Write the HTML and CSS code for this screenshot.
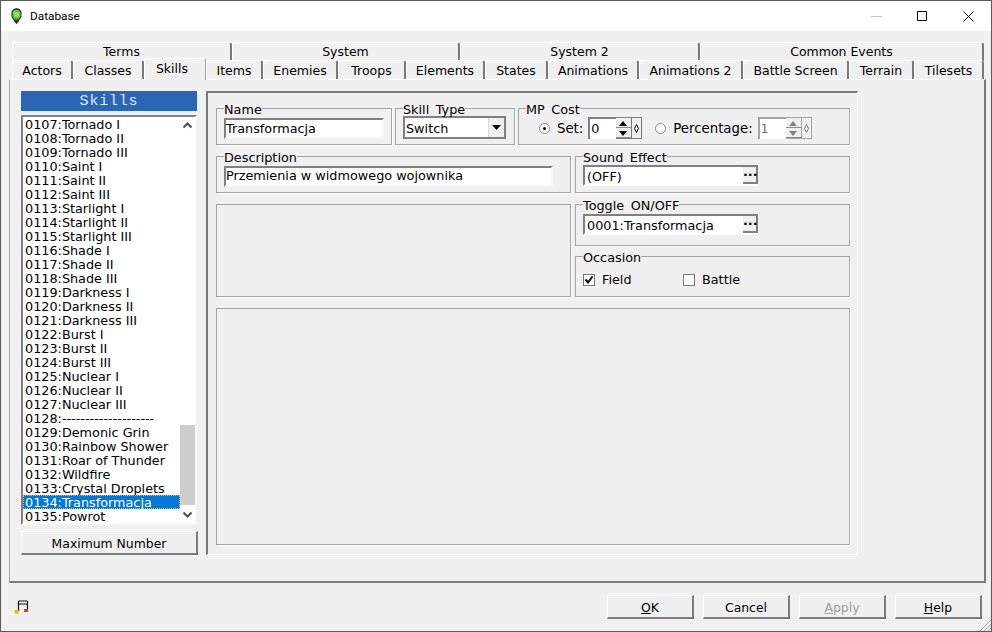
FILE: index.html
```html
<!DOCTYPE html>
<html lang="en">
<head>
    <meta charset="UTF-8">
    <title>Database</title>
    <link rel="stylesheet" href="styles.css">
</head>
<body>
    <div class="window">
        <div class="titlebar">
            <svg class="app-icon" width="11" height="16" viewBox="0 0 11 16">
                <path d="M5.500 0 L8.500 1 L10.500 3.500 L10.500 9 L8.500 12 L7.500 14 L5.500 16 L3.500 14 L2.500 12 L0.500 9 L0.500 3.500 L2.500 1 Z" fill="#3a2a3a"/>
                <path d="M5.500 1.500 L8 2.500 L9.500 4.500 L9.500 8.500 L7.500 11.500 L3.500 11.500 L1.500 8.500 L1.500 4.500 L3 2.500 Z" fill="#4fc45a"/>
                <path d="M4.500 4 L7.500 4 L8.500 6.500 L6.500 9.500 L3.500 8.500 L3 6 Z" fill="#a6e23a"/>
                <path d="M2.500 3 L4.500 2.500 L3.500 4.500 L2.500 4.500 Z" fill="#7fd0f0"/>
            </svg>
            <span class="title-text">Database</span>
            <div class="win-controls">
                <svg width="11" height="11" viewBox="0 0 11 11"><path d="M0 5.500 H11" stroke="#c4c4c4" fill="none"/></svg>
                <svg width="11" height="11" viewBox="0 0 11 11"><path d="M0.500 0.500 H9.500 V9.500 H0.500 Z" stroke="#000" fill="none"/></svg>
                <svg width="11" height="11" viewBox="0 0 11 11"><path d="M0.500 0.500 L10.500 10.500 M10.500 0.500 L0.500 10.500" stroke="#000" fill="none"/></svg>
            </div>
        </div>

        <div class="content">
            <div class="tabs-top">
                <div class="tab">Terms</div>
                <div class="tab">System</div>
                <div class="tab">System 2</div>
                <div class="tab">Common Events</div>
            </div>
            <div class="tabs-bottom">
                <div class="tab">Actors</div>
                <div class="tab">Classes</div>
                <div class="tab tab-active">Skills</div>
                <div class="tab">Items</div>
                <div class="tab">Enemies</div>
                <div class="tab">Troops</div>
                <div class="tab">Elements</div>
                <div class="tab">States</div>
                <div class="tab">Animations</div>
                <div class="tab">Animations 2</div>
                <div class="tab">Battle Screen</div>
                <div class="tab">Terrain</div>
                <div class="tab">Tilesets</div>
            </div>

            <div class="tab-panel">
                <div class="side">
                    <div class="side-header">Skills</div>
                    <div class="list-box">
                        <div class="list-items">
                            <div>0107:Tornado I</div>
                            <div>0108:Tornado II</div>
                            <div>0109:Tornado III</div>
                            <div>0110:Saint I</div>
                            <div>0111:Saint II</div>
                            <div>0112:Saint III</div>
                            <div>0113:Starlight I</div>
                            <div>0114:Starlight II</div>
                            <div>0115:Starlight III</div>
                            <div>0116:Shade I</div>
                            <div>0117:Shade II</div>
                            <div>0118:Shade III</div>
                            <div>0119:Darkness I</div>
                            <div>0120:Darkness II</div>
                            <div>0121:Darkness III</div>
                            <div>0122:Burst I</div>
                            <div>0123:Burst II</div>
                            <div>0124:Burst III</div>
                            <div>0125:Nuclear I</div>
                            <div>0126:Nuclear II</div>
                            <div>0127:Nuclear III</div>
                            <div>0128:--------------------</div>
                            <div>0129:Demonic Grin</div>
                            <div>0130:Rainbow Shower</div>
                            <div>0131:Roar of Thunder</div>
                            <div>0132:Wildfire</div>
                            <div>0133:Crystal Droplets</div>
                            <div class="list-selected">0134:Transformacja</div>
                            <div>0135:Powrot</div>
                        </div>
                        <div class="scrollbar">
                            <svg class="scroll-arrow" width="15" height="17" viewBox="0 0 15 17"><path d="M3.500 10.500 L7.500 6.500 L11.500 10.500" stroke="#505050" stroke-width="2" fill="none"/></svg>
                            <div class="scroll-track"><div class="scroll-thumb"></div></div>
                            <svg class="scroll-arrow" width="15" height="17" viewBox="0 0 15 17"><path d="M3.500 6.500 L7.500 10.500 L11.500 6.500" stroke="#505050" stroke-width="2" fill="none"/></svg>
                        </div>
                    </div>
                    <div class="btn btn-max">Maximum Number</div>
                </div>

                <div class="form">
                    <div class="form-row-top">
                        <fieldset class="group group-name">
                            <legend>Name</legend>
                            <div class="field field-name">Transformacja</div>
                        </fieldset>
                        <fieldset class="group group-type">
                            <legend>Skill Type</legend>
                            <div class="combo">
                                <span class="combo-text">Switch</span>
                                <span class="combo-btn"><svg width="9" height="5" viewBox="0 0 9 5"><path d="M0 0 H9 L4.500 5 Z" fill="#000"/></svg></span>
                            </div>
                        </fieldset>
                        <fieldset class="group group-cost">
                            <legend>MP Cost</legend>
                            <div class="cost-line">
                                <span class="radio radio-on"></span>
                                <span class="cost-label">Set:</span>
                                <div class="spin">
                                    <span class="spin-field">0</span>
                                    <span class="spin-btns">
                                        <span class="spin-up"></span>
                                        <span class="spin-down"></span>
                                    </span>
                                    <span class="spin-extra"><svg width="5" height="9" viewBox="0 0 5 9"><path d="M2.500 0.500 L4.500 4.500 L2.500 8.500 L0.500 4.500 Z" fill="none" stroke="#000"/></svg></span>
                                </div>
                                <span class="radio radio-second"></span>
                                <span class="cost-label">Percentage:</span>
                                <div class="spin spin-off">
                                    <span class="spin-field">1</span>
                                    <span class="spin-btns">
                                        <span class="spin-up"></span>
                                        <span class="spin-down"></span>
                                    </span>
                                    <span class="spin-extra"><svg width="5" height="9" viewBox="0 0 5 9"><path d="M2.500 0.500 L4.500 4.500 L2.500 8.500 L0.500 4.500 Z" fill="none" stroke="#808080"/></svg></span>
                                </div>
                            </div>
                        </fieldset>
                    </div>

                    <div class="form-row-mid">
                        <div class="form-col-left">
                            <fieldset class="group group-desc">
                                <legend>Description</legend>
                                <div class="field field-desc">Przemienia w widmowego wojownika</div>
                            </fieldset>
                            <div class="blank-box"></div>
                        </div>
                        <div class="form-col-right">
                            <fieldset class="group group-sound">
                                <legend>Sound Effect</legend>
                                <div class="picker">
                                    <span class="picker-text">(OFF)</span>
                                    <span class="picker-btn">...</span>
                                </div>
                            </fieldset>
                            <fieldset class="group group-toggle">
                                <legend>Toggle ON/OFF</legend>
                                <div class="picker">
                                    <span class="picker-text">0001:Transformacja</span>
                                    <span class="picker-btn">...</span>
                                </div>
                            </fieldset>
                            <fieldset class="group group-occasion">
                                <legend>Occasion</legend>
                                <div class="check-line">
                                    <span class="check check-field">
                                        <svg width="10" height="10" viewBox="0 0 10 10"><path d="M1.500 4.500 L4 7.500 L8.500 1.500" stroke="#000" stroke-width="2" fill="none"/></svg>
                                    </span>
                                    <span class="check-label-field">Field</span>
                                    <span class="check"></span>
                                    <span class="check-label-battle">Battle</span>
                                </div>
                            </fieldset>
                        </div>
                    </div>

                    <div class="big-box"></div>
                </div>
            </div>

            <div class="footer">
                <svg class="music-icon" width="15" height="15" viewBox="0 0 15 15">
                    <path d="M4.500 1 H13.500 M4.500 4 H13.500 M4.500 1 V11 M13.500 1 V10" stroke="#111" stroke-width="1.200" fill="none"/>
                    <rect x="0.500" y="10" width="4" height="3.500" fill="#f0b400"/>
                    <rect x="10" y="9" width="4" height="3" fill="#e04020"/>
                </svg>
                <div class="footer-btns">
                    <div class="btn"><u>O</u>K</div>
                    <div class="btn">Cancel</div>
                    <div class="btn btn-disabled"><u>A</u>pply</div>
                    <div class="btn"><u>H</u>elp</div>
                </div>
            </div>
            <svg class="grip" width="12" height="12" viewBox="0 0 12 12"><path d="M12 1 L1 12 M12 5 L5 12 M12 9 L9 12" stroke="#a8a8a8" fill="none"/></svg>
        </div>
    </div>
</body>
</html>
```

FILE: styles.css
```css
* {
    margin: 0;
    padding: 0;
    box-sizing: border-box;
}
html, body {
    height: 100%;
}
body {
    font-family: "DejaVu Sans", sans-serif;
    font-size: 12.800px;
    color: #000;
    background: #f0f0f0;
    overflow: hidden;
}
.window {
    width: 992px;
    height: 632px;
    border: 1px solid #5a5a5a;
    display: flex;
    flex-direction: column;
}

/* title bar */
.titlebar {
    height: 30px;
    background: #fff;
    display: flex;
    align-items: center;
    padding-left: 10px;
}
.app-icon {
    margin-right: 8px;
}
.title-text {
    font-size: 11.800px;
    font-family: Roboto, sans-serif;
}
.win-controls {
    margin-left: auto;
    display: flex;
    gap: 35px;
    padding-right: 17px;
}

/* tabs */
.content {
    flex: 1;
    position: relative;
    padding: 11px 0 0 8px;
    display: flex;
    flex-direction: column;
}
.tabs-top, .tabs-bottom {
    display: grid;
    margin-left: 3px;
    width: 972px;
    font-size: 12.500px;
}
.tabs-top {
    height: 18px;
    grid-template-columns: 220px 228px 240px 284px;
}
.tabs-bottom {
    height: 19px;
    grid-template-columns: 61px 71px 62px 57px 75px 68px 79px 63px 91px 104px 106px 65px 70px;
}
.tab {
    text-align: center;
    line-height: 18px;
    border-top: 1px solid #fff;
    border-left: 1px solid #fff;
    border-right: 2px solid #7a7a7a;
    border-top-left-radius: 3px;
    border-top-right-radius: 3px;
}
.tabs-bottom .tab {
    padding-top: 1px;
    line-height: 18px;
}
.tabs-bottom .tab-active {
    position: relative;
    z-index: 1;
    height: 22px;
    margin-top: -2px;
    padding-right: 6px;
    background: #f0f0f0;
    line-height: 17px;
    border-right-width: 1px;
    border-right-color: #a0a0a0;
}
.tab-panel {
    width: 977px;
    height: 504px;
    border-top: 1px solid #fff;
    border-left: 1px solid #a8a8a8;
    border-right: 2px solid #7a7a7a;
    border-bottom: 2px solid #7a7a7a;
    padding: 11px 0 0 11px;
    display: flex;
    gap: 8px;
}

/* skill list */
.side {
    width: 177px;
    display: flex;
    flex-direction: column;
}
.side-header {
    width: 176px;
    height: 20px;
    background: #2a66b5;
    color: #dfe8f5;
    text-align: center;
    font-family: "Liberation Mono", monospace;
    font-size: 15px;
    line-height: 21px;
    letter-spacing: 0.800px;
}
.list-box {
    width: 176px;
    height: 410px;
    margin-top: 4px;
    background: #fff;
    border-top: 2px solid #808080;
    border-left: 2px solid #808080;
    border-right: 2px solid #f8f8f8;
    border-bottom: 2px solid #f8f8f8;
    display: flex;
}
.list-items {
    flex: 1;
    overflow: hidden;
}
.list-items div {
    height: 14px;
    line-height: 16px;
    padding-left: 2px;
    white-space: nowrap;
}
.list-selected {
    background: #0078d7;
    color: #fff;
    outline: 1px dotted #b0c4a0;
    outline-offset: -1px;
}
.scrollbar {
    width: 15px;
    display: flex;
    flex-direction: column;
}
.scroll-track {
    flex: 1;
    display: flex;
    flex-direction: column;
    justify-content: flex-end;
    padding-bottom: 1px;
}
.scroll-thumb {
    height: 80px;
    background: #cdcdcd;
}
.btn {
    background: #f0f0f0;
    text-align: center;
    font-size: 12.400px;
    border-top: 1px solid #fff;
    border-left: 1px solid #fff;
    border-right: 2px solid #7a7a7a;
    border-bottom: 2px solid #7a7a7a;
    width: 87px;
    height: 24px;
    line-height: 23px;
}
.btn-max {
    width: 177px;
    margin-top: 6px;
}
.btn-disabled {
    color: #a0a0a0;
}

/* right side form */
.form {
    width: 652px;
    height: 464px;
    border-top: 2px solid #7a7a7a;
    border-left: 2px solid #7a7a7a;
    border-right: 1px solid #fff;
    border-bottom: 1px solid #fff;
    padding: 8px 0 0 8px;
}
.group {
    border: 1px solid #a4a4a4;
    box-shadow: 1px 1px 0 #fff;
    padding: 0;
    min-width: 0;
}
.group legend {
    margin-left: 7px;
    padding: 0;
    line-height: 18px;
    height: 14px;
    word-spacing: 2.500px;
}
.form-row-top {
    display: flex;
    gap: 3px;
}
.group-name, .group-type, .group-cost {
    height: 44px;
}
.group-name {
    width: 176px;
}
.group-type {
    width: 120px;
}
.group-cost {
    width: 332px;
}
.form-row-mid {
    display: flex;
    gap: 4px;
    margin-top: 4px;
}
.form-col-left {
    width: 355px;
}
.form-col-right {
    width: 275px;
}
.group-desc, .group-sound {
    height: 44px;
}
.group-toggle {
    height: 49px;
    margin-top: 4px;
}
.group-occasion {
    height: 48px;
    margin-top: 3px;
}
.blank-box {
    height: 93px;
    margin-top: 11px;
    border: 1px solid #a4a4a4;
    box-shadow: 1px 1px 0 #fff;
}
.big-box {
    width: 634px;
    height: 237px;
    margin-top: 11px;
    border: 1px solid #a4a4a4;
    box-shadow: 1px 1px 0 #fff;
}

/* inputs */
.field, .combo, .picker {
    background: #fff;
    border-top: 2px solid #808080;
    border-left: 2px solid #808080;
    border-right: 2px solid #f8f8f8;
    border-bottom: 2px solid #f8f8f8;
    line-height: 17px;
}
.field {
    height: 21px;
    margin: 3px 0 0 7px;
}
.field-name {
    width: 160px;
    line-height: 18px;
}
.field-desc {
    width: 329px;
    line-height: 15px;
}
.combo {
    width: 103px;
    height: 23px;
    margin: 1px 0 0 7px;
    display: flex;
    justify-content: space-between;
    border-right-color: #808080;
    border-bottom-color: #808080;
    line-height: 21px;
}
.combo-text {
    padding-left: 1px;
}
.combo-btn {
    width: 16px;
    background: #f0f0f0;
    border-left: 1px solid #d8d8d8;
    display: flex;
    align-items: center;
    justify-content: center;
}
.picker {
    width: 175px;
    margin: 2px 0 0 7px;
    display: flex;
    justify-content: space-between;
    height: 21px;
    border-right: none;
    border-bottom-color: #fff;
    line-height: 19px;
}
.picker-text {
    padding-left: 2px;
}
.picker-btn {
    width: 15px;
    height: 17px;
    background: #f0f0f0;
    border-right: 2px solid #808080;
    border-bottom: 2px solid #808080;
    text-align: center;
    font-weight: bold;
    line-height: 10px;
}
.group-toggle .picker {
    margin-top: 3px;
}

/* mp cost line */
.cost-line {
    display: flex;
    align-items: center;
    margin: 2px 0 0 20px;
    height: 22px;
}
.radio {
    flex: none;
    width: 11px;
    height: 11px;
    border-radius: 50%;
    background: #fff;
    border: 1px solid #8a8a8a;
    margin-right: 7px;
    position: relative;
}
.radio-on::after {
    content: "";
    position: absolute;
    left: 3px;
    top: 3px;
    width: 3px;
    height: 3px;
    border-radius: 50%;
    background: #000;
}
.radio-second {
    margin-left: 13px;
}
.cost-label {
    margin-right: 5px;
    font-size: 13.300px;
}
.spin {
    display: flex;
    height: 22px;
    background: #f0f0f0;
}
.spin-field {
    width: 28px;
    background: #fff;
    border-top: 2px solid #808080;
    border-left: 2px solid #808080;
    line-height: 19px;
    padding-left: 1px;
}
.spin-btns {
    width: 15px;
    display: flex;
    flex-direction: column;
    border-top: 1px solid #808080;
    border-bottom: 1px solid #808080;
}
.spin-up, .spin-down {
    flex: 1;
    position: relative;
    background: #f0f0f0;
    border-bottom: 1px solid #8a8a8a;
}
.spin-up::after, .spin-down::after {
    content: "";
    position: absolute;
    left: 3px;
    top: 3px;
    border-left: 4px solid transparent;
    border-right: 4px solid transparent;
}
.spin-up::after {
    border-bottom: 5px solid #000;
}
.spin-down::after {
    border-top: 5px solid #000;
}
.spin-extra {
    width: 11px;
    display: flex;
    align-items: center;
    justify-content: center;
    border: 1px solid #7a7a7a;
}
.spin-off {
    color: #6d6d6d;
}
.spin-off .spin-field {
    border-top-color: #a4a4a4;
    border-left-color: #a4a4a4;
}
.spin-off .spin-up::after {
    border-bottom-color: #808080;
}
.spin-off .spin-down::after {
    border-top-color: #808080;
}
.spin-off .spin-extra, .spin-off .spin-btns {
    border-color: #a4a4a4;
}

/* occasion */
.check-line {
    display: flex;
    align-items: center;
    margin: 9px 0 0 7px;
}
.check {
    width: 12px;
    height: 12px;
    background: #fff;
    border: 1px solid #7a7a7a;
    display: flex;
    align-items: center;
    justify-content: center;
}
.check-label-field {
    width: 88px;
    padding-left: 7px;
}
.check-label-battle {
    padding-left: 7px;
}

/* footer */
.footer {
    width: 974px;
    height: 48px;
    display: flex;
    align-items: center;
    padding: 0 0 0 5px;
}
.music-icon {
    flex: none;
}
.footer-btns {
    margin-left: auto;
    margin-right: 1px;
    display: flex;
    gap: 9px;
}
.grip {
    position: absolute;
    right: 0;
    bottom: 0;
}
```
